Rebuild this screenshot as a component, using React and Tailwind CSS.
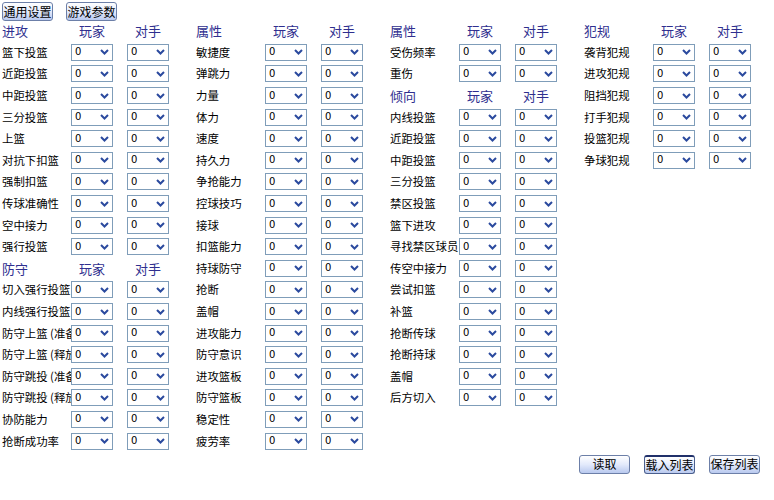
import React from 'react';

const FONT = { fontFamily: '"Noto Sans CJK SC", "Noto Sans", sans-serif' };

// column data: 'h:' prefix = section header row
const columns = [
  ['h:进攻', '篮下投篮', '近距投篮', '中距投篮', '三分投篮', '上篮', '对抗下扣篮', '强制扣篮', '传球准确性', '空中接力', '强行投篮',
    'h:防守', '切入强行投篮', '内线强行投篮', '防守上篮 (准备)', '防守上篮 (释放)', '防守跳投 (准备)', '防守跳投 (释放)', '协防能力', '抢断成功率'],
  ['h:属性', '敏捷度', '弹跳力', '力量', '体力', '速度', '持久力', '争抢能力', '控球技巧', '接球', '扣篮能力', '持球防守', '抢断', '盖帽',
    '进攻能力', '防守意识', '进攻篮板', '防守篮板', '稳定性', '疲劳率'],
  ['h:属性', '受伤频率', '重伤', 'h:倾向', '内线投篮', '近距投篮', '中距投篮', '三分投篮', '禁区投篮', '篮下进攻', '寻找禁区球员', '传空中接力',
    '尝试扣篮', '补篮', '抢断传球', '抢断持球', '盖帽', '后方切入'],
  ['h:犯规', '袭背犯规', '进攻犯规', '阻挡犯规', '打手犯规', '投篮犯规', '争球犯规'],
];

function FakeSelect() {
  return (
    <div className="w-[42px] h-[17px] shrink-0 border border-[#7f9db9] bg-white flex items-center justify-between pl-[3px] pr-[3px]">
      <span className="text-[10px] text-black leading-none" style={{ fontFamily: '"DejaVu Sans", sans-serif' }}>0</span>
      <svg width="9" height="6" viewBox="0 0 9 6">
        <path d="M1 1 L4.5 4.5 L8 1" fill="none" stroke="#2b4a9e" strokeWidth="2" />
      </svg>
    </div>
  );
}

function Btn({ children, focused }) {
  return (
    <button
      className={`w-[51px] h-[19px] rounded-[3px] border text-[12px] leading-none text-black bg-gradient-to-b from-[#ffffff] via-[#e3eafb] to-[#b9c9ef] ${
        focused ? 'border-[#4b5f8e] border-t-[#20306a] border-t-2' : 'border-[#6c7fa8]'
      }`}
      style={FONT}
    >
      {children}
    </button>
  );
}

function Column({ rows }) {
  return (
    <div className="w-[194px] shrink-0 flex flex-col">
      {rows.map((r, i) =>
        r.startsWith('h:') ? (
          <div key={i} className="h-[21.6px] flex items-center text-[13px] text-[#2f2f8f]">
            <span className="w-[69px]">{r.slice(2)}</span>
            <span className="w-[42px] text-center">玩家</span>
            <span className="w-[14px]" />
            <span className="w-[42px] text-center">对手</span>
          </div>
        ) : (
          <div key={i} className="h-[21.6px] flex items-center">
            <span className="w-[69px] shrink-0 overflow-hidden whitespace-nowrap text-[11.4px] text-black">{r}</span>
            <FakeSelect />
            <span className="w-[14px]" />
            <FakeSelect />
          </div>
        )
      )}
    </div>
  );
}

export default function App() {
  return (
    <div className="w-[774px] h-[500px] bg-white overflow-hidden relative" style={FONT}>
      <div className="flex gap-[13px] pl-[2px] pt-[2px] h-[20px]">
        <Btn>通用设置</Btn>
        <Btn>游戏参数</Btn>
      </div>
      <div className="flex pl-[2px]">
        {columns.map((c, i) => (
          <Column key={i} rows={c} />
        ))}
      </div>
      <div className="flex justify-end gap-[14px] pr-[14px] mt-[3px]">
        <Btn>读取</Btn>
        <Btn focused>载入列表</Btn>
        <Btn>保存列表</Btn>
      </div>
    </div>
  );
}
